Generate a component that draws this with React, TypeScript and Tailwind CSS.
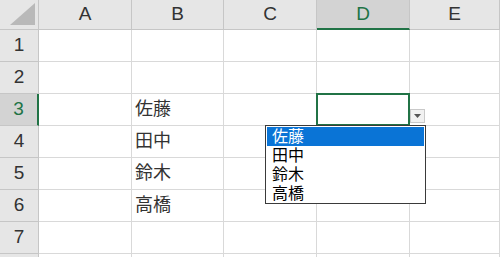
const Columns: string[] = ["A", "B", "C", "D", "E"];
const Rows: number[] = [1, 2, 3, 4, 5, 6, 7, 8];
const Names: string[] = ["佐藤", "田中", "鈴木", "高橋"];

const colWidths = "grid-cols-[39px_93px_92px_93px_93px_1fr]";

const cellText = (row: number, col: string) => {
  if (col === "B" && row >= 3 && row <= 6) return Names[row - 3];
  return "";
};

const DropdownList = () => {
  return (
    <>
      {/* little arrow button beside the cell */}
      <div className="absolute left-[93px] top-[15px] w-[15px] h-[14px] bg-[#f1f1f1] border border-[#c9c9c9] flex items-center justify-center z-20">
        <svg width="7" height="4" viewBox="0 0 7 4">
          <path d="M0 0h7L3.5 4z" fill="#555" />
        </svg>
      </div>
      <div className="absolute left-[-52px] top-[31px] w-[161px] h-[79px] bg-white border border-[#3a3a3a] z-20 pt-[1px] px-[1px]">
        {Names.map((name, index) => {
          return (
            <div
              key={index}
              className={`h-[19px] leading-[19px] pl-[5px] text-[16px] ${
                index === 0 ? "bg-[#0a74d6] text-white" : "text-black"
              }`}
            >
              {name}
            </div>
          );
        })}
      </div>
    </>
  );
};

export default function App() {
  return (
    <div
      className="w-[500px] h-[257px] overflow-hidden bg-white"
      style={{ fontFamily: '"Liberation Sans", "Noto Sans CJK JP", sans-serif' }}
    >
      <div className={`grid ${colWidths}`}>
        {/* header row */}
        <div className="h-[30px] bg-[#e6e6e6] border-r border-b border-[#c6c6c6] relative overflow-hidden">
          <svg className="absolute right-[3px] bottom-[4px]" width="25" height="22" viewBox="0 0 25 22">
            <path d="M25 0V22H0z" fill="#b9b9b9" />
          </svg>
        </div>
        {Columns.map((col) => {
          const selected = col === "D";
          return (
            <div
              key={col}
              className={`h-[30px] flex items-center justify-center text-[19px] border-r ${
                selected
                  ? "bg-[#d3d3d3] text-[#217346] border-b-2 border-b-[#217346] border-r-[#c6c6c6]"
                  : "bg-[#e6e6e6] text-[#333] border-b border-[#c6c6c6]"
              }`}
            >
              {col}
            </div>
          );
        })}

        {/* body rows */}
        {Rows.map((row) => {
          const rowSelected = row === 3;
          return [
            <div
              key={`h${row}`}
              className={`h-[32px] flex items-center justify-center text-[19px] border-b border-[#c6c6c6] ${
                rowSelected
                  ? "bg-[#d3d3d3] text-[#217346] border-r-2 border-r-[#217346]"
                  : "bg-[#e6e6e6] text-[#333] border-r"
              }`}
            >
              {row < 8 ? row : ""}
            </div>,
            ...Columns.map((col) => {
              const active = row === 3 && col === "D";
              return (
                <div
                  key={`${col}${row}`}
                  className="h-[32px] border-r border-b border-[#d9d9d9] relative flex items-center pl-[3px] text-[18px] text-[#333]"
                >
                  {cellText(row, col)}
                  {active && (
                    <>
                      <div className="absolute left-[-1px] top-[-1px] w-[94px] h-[33px] border-2 border-[#217346] z-10" />
                      <DropdownList />
                    </>
                  )}
                </div>
              );
            }),
          ];
        })}
      </div>
    </div>
  );
}
